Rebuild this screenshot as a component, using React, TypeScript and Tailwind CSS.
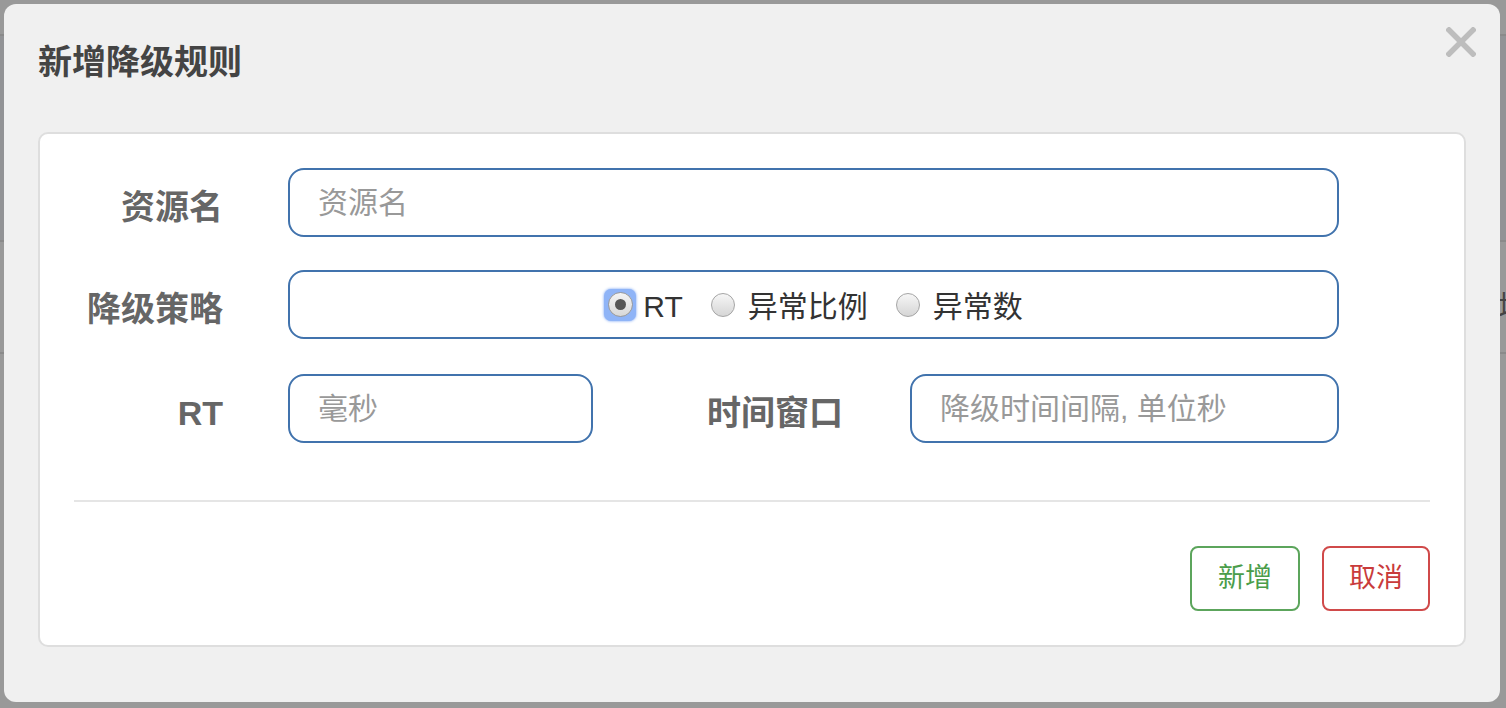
import React from "react";

const font = { fontFamily: '"Liberation Sans", "Noto Sans CJK SC", sans-serif' };

function Radio({ label, checked }: { label: string; checked?: boolean }) {
  return (
    <label className="flex items-center">
      {checked ? (
        <span className="flex h-[32px] w-[32px] items-center justify-center rounded-[7px] bg-[#8fb4f7] shadow-[0_0_3px_#6d9cf2]">
          <span className="flex h-[25px] w-[25px] items-center justify-center rounded-full border border-[#9a9a9a] bg-gradient-to-b from-[#f4f4f4] to-[#d8d8d8]">
            <span className="h-[11px] w-[11px] rounded-full bg-[#555]" />
          </span>
        </span>
      ) : (
        <span className="h-[24px] w-[24px] rounded-full border border-[#a5a5a5] bg-gradient-to-b from-[#f6f6f6] to-[#d6d6d6]" />
      )}
      <span className={checked ? "ml-[7px] pt-[4px] text-[30px] text-[#333]" : "ml-[13px] pt-[4px] text-[30px] text-[#333]"}>
        {label}
      </span>
    </label>
  );
}

function Label({ children, className }: { children: React.ReactNode; className: string }) {
  return (
    <div className={`pt-[8px] text-right text-[34px] font-bold leading-[40px] text-[#666] ${className}`}>
      {children}
    </div>
  );
}

const inputCls =
  "h-[69px] rounded-[16px] border-2 border-[#4173ad] bg-white px-[28px] text-[30px] text-[#333] outline-none placeholder:text-[#999]";

export default function App() {
  return (
    <div className="relative h-[708px] w-[1506px] overflow-hidden bg-[#999999]" style={font}>
      {/* page behind the overlay */}
      <div className="absolute left-0 right-0 top-[34px] h-[2px] bg-[#8a8a8a]" />
      <div className="absolute left-0 right-0 top-[36px] h-[204px] bg-[#929396]" />
      <div className="absolute left-0 right-0 top-[240px] h-[2px] bg-[#8a8a8a]" />
      <div className="absolute left-0 right-0 top-[352px] h-[2px] bg-[#8a8a8a]" />
      <div className="absolute left-[1498px] top-[284px] text-[30px] text-[#444]">增</div>

      <div className="absolute left-[4px] top-[4px] flex h-[698px] w-[1496px] flex-col rounded-[12px] bg-[#f0f0f0] px-[34px]">
        <div className="flex items-start justify-between">
          <h4 className="mt-[38px] text-[34px] font-bold leading-[40px] text-[#444]">新增降级规则</h4>
          <svg className="mr-[-10px] mt-[23px]" width="30" height="30" viewBox="0 0 30 30">
            <path d="M3 3L27 27M27 3L3 27" stroke="#bdbdbd" strokeWidth="5.5" strokeLinecap="square" />
          </svg>
        </div>

        <div className="mt-[50px] flex w-[1428px] flex-col rounded-[10px] border-2 border-[#dedede] bg-white px-[34px] pb-[34px] pt-[34px]">
          <div className="flex items-center">
            <Label className="w-[149px]">资源名</Label>
            <input className={`${inputCls} ml-[65px] w-[1051px]`} placeholder="资源名" />
          </div>

          <div className="mt-[33px] flex items-center">
            <Label className="w-[149px]">降级策略</Label>
            <div className="ml-[65px] flex h-[69px] w-[1051px] items-center justify-center gap-[28px] rounded-[16px] border-2 border-[#4173ad]">
              <Radio label="RT" checked />
              <Radio label="异常比例" />
              <Radio label="异常数" />
            </div>
          </div>

          <div className="mt-[35px] flex items-center">
            <Label className="w-[149px]">RT</Label>
            <input className={`${inputCls} ml-[65px] w-[305px]`} placeholder="毫秒" />
            <Label className="w-[250px]">时间窗口</Label>
            <input className={`${inputCls} ml-[67px] w-[429px]`} placeholder="降级时间间隔, 单位秒" />
          </div>

          <div className="mt-[57px] h-[2px] w-full bg-[#e5e5e5]" />

          <div className="mt-[44px] flex justify-end gap-[22px]">
            <button className="h-[65px] w-[110px] rounded-[8px] border-2 border-[#5ca55c] bg-white text-[27px] text-[#4a9d4a]">
              新增
            </button>
            <button className="h-[65px] w-[108px] rounded-[8px] border-2 border-[#d04a4a] bg-white text-[27px] text-[#c93b3b]">
              取消
            </button>
          </div>
        </div>
      </div>
    </div>
  );
}
